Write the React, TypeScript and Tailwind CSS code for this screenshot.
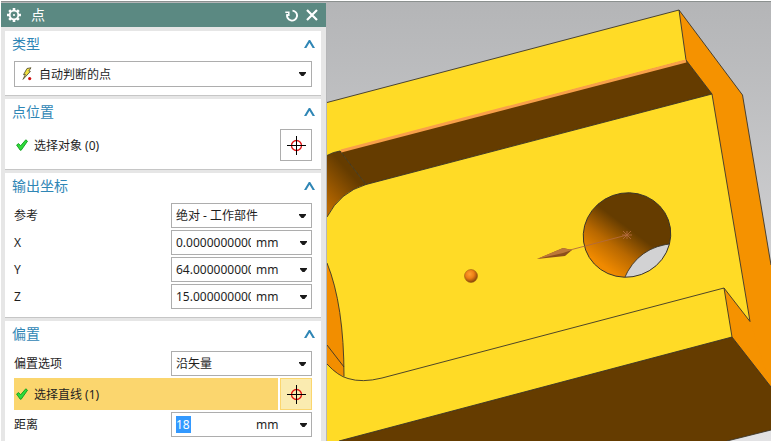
import React, { useState } from 'react';

interface SectionProps {
  title: string;
  children: React.ReactNode;
}

interface OptionSelectProps {
  id: string;
  label: string;
  value: string;
}

const COORDS = [
  { axis: 'X', value: '0.000000000000' },
  { axis: 'Y', value: '64.00000000000' },
  { axis: 'Z', value: '15.00000000000' },
];

const Caret = () => (
  <svg width="7" height="4" viewBox="0 0 7 4" className="pointer-events-none shrink-0" aria-hidden="true">
    <path d="M0 0h7v1L4.5 4h-2L0 1z" fill="#1a1a1a" />
  </svg>
);

const GearIcon = () => (
  <svg width="14" height="14" viewBox="0 0 14 14" aria-hidden="true">
    <g stroke="#fff" strokeWidth="2.6">
      <path d="M7 0v14M0 7h14M2.2 2.2l9.6 9.6M11.8 2.2l-9.6 9.6" />
    </g>
    <circle cx="7" cy="7" r="5.2" fill="#fff" />
    <circle cx="7" cy="7" r="3.4" fill="#5b8982" />
    <circle cx="7" cy="7" r="1.1" fill="#fff" />
  </svg>
);

const ResetIcon = () => (
  <svg width="13" height="14" viewBox="0 0 13 14" fill="none" stroke="#fff" aria-hidden="true">
    <path d="M7.5 2.6A5 5 0 1 1 2.3 6" strokeWidth="1.9" />
    <path d="M.3 4.2h3.5V8" strokeWidth="1.5" />
  </svg>
);

const CloseIcon = () => (
  <svg width="12" height="12" viewBox="0 0 12 12" aria-hidden="true">
    <path d="M1 1l10 10M11 1L1 11" stroke="#fff" strokeWidth="2.2" />
  </svg>
);

const CheckIcon = () => (
  <svg width="12" height="12" viewBox="0 0 12 12" className="shrink-0" aria-hidden="true">
    <path d="M.6 6l2-1.4 2 2.2L9.8.8l1.7 1.4-6.3 9h-1z" fill="#2fdc3c" stroke="#119c1c" strokeWidth=".9" />
  </svg>
);

const TargetIcon = () => (
  <svg width="19" height="19" viewBox="0 0 19 19" fill="none" aria-hidden="true">
    <circle cx="9.5" cy="9.5" r="5" stroke="#e01010" strokeWidth="1.3" />
    <path d="M9.5 0v19M0 9.5h19" stroke="#000" />
  </svg>
);

const InferIcon = () => (
  <svg width="10" height="14" viewBox="0 0 10 14" aria-hidden="true">
    <path d="M5 1.5L9 .8 6.8 4l1.6.4L1 12.4l2.4-5-1.9.3z" fill="#f0e040" stroke="#5a5538" strokeWidth=".9" />
    <circle cx="7.7" cy="11.6" r="1.6" fill="#d01010" />
  </svg>
);

const Section: React.FC<SectionProps> = ({ title, children }) => {
  const [open, setOpen] = useState(true);

  return (
    <section className="border-b border-[#c6c6c6] bg-white pb-2">
      <h2>
        <button
          type="button"
          aria-expanded={open}
          onClick={() => setOpen(!open)}
          className="flex h-[26px] w-full items-center justify-between pr-[6px] pl-[7px] text-sm text-[#2f86b5]"
        >
          {title}
          <svg
            width="11"
            height="8"
            viewBox="0 0 11 8"
            className={open ? '' : 'rotate-180'}
            aria-hidden="true"
          >
            <path d="M0 8L4.8 0h1.4L11 8H8.6L5.5 2.8 2.4 8z" fill="#2f86b5" />
          </svg>
        </button>
      </h2>
      {open && <div className="flex flex-col gap-[2px] px-[9px] pt-1">{children}</div>}
    </section>
  );
};

const OptionSelect: React.FC<OptionSelectProps> = ({ id, label, value }) => (
  <div className="flex items-center">
    <label htmlFor={id} className="flex-1">{label}</label>
    <div className="relative w-[141px]">
      <select
        id={id}
        className="h-[25px] w-full appearance-none border border-[#adadad] bg-white pr-4 pl-1 outline-none"
      >
        <option>{value}</option>
      </select>
      <span className="pointer-events-none absolute inset-y-0 right-[6px] flex items-center"><Caret /></span>
    </div>
  </div>
);

const ValueField: React.FC<OptionSelectProps & { selected?: boolean }> = ({ id, label, value, selected }) => (
  <div className="flex items-center">
    <label htmlFor={id} className="flex-1">{label}</label>
    <div className="flex h-[25px] w-[141px] items-center border border-[#adadad] bg-white pr-1 pl-1">
      <div className="flex w-[75px]">
        <input
          id={id}
          defaultValue={value}
          className={`h-[17px] min-w-0 outline-none ${selected ? 'w-[15px] bg-[#3399ff] text-white' : 'w-full'}`}
        />
      </div>
      <span className="ml-[5px] flex-1">mm</span>
      <button type="button" aria-label={`${label} mm`}><Caret /></button>
    </div>
  </div>
);

const PickRow = ({ label, active = false }: { label: string; active?: boolean }) => (
  <div className="flex gap-[2px]">
    <div className={`flex h-8 flex-1 items-center gap-[6px] pl-[2px] ${active ? 'bg-[#fbd66e]' : ''}`}>
      <CheckIcon />
      <span>{label}</span>
    </div>
    <button
      type="button"
      aria-label={label}
      className={`flex size-8 items-center justify-center border ${
        active ? 'border-[#fbd66e] bg-[#faebb0]' : 'border-[#adadad] bg-white'
      }`}
    >
      <TargetIcon />
    </button>
  </div>
);

const ModelView = () => (
  <svg
    viewBox="327 2 444 439"
    preserveAspectRatio="xMinYMin slice"
    className="h-full w-full"
    role="img"
  >
    <defs>
      <linearGradient id="sky" x1="0" y1="0" x2="0" y2="1">
        <stop offset="0" stopColor="#b4b5b7" />
        <stop offset="1" stopColor="#e2e2e4" />
      </linearGradient>
      <linearGradient id="bore" gradientUnits="userSpaceOnUse" x1="594" y1="256" x2="632" y2="231">
        <stop offset="0" stopColor="#f08a00" />
        <stop offset="0.5" stopColor="#b86800" />
        <stop offset="1" stopColor="#653c00" />
      </linearGradient>
      <linearGradient id="fillet" gradientUnits="userSpaceOnUse" x1="322" y1="200" x2="351" y2="174">
        <stop offset="0" stopColor="#b86800" />
        <stop offset="1" stopColor="#653c00" />
      </linearGradient>
      <radialGradient id="ball" cx="0.4" cy="0.35" r="0.65">
        <stop offset="0" stopColor="#ffa030" />
        <stop offset="0.5" stopColor="#ee7f16" />
        <stop offset="1" stopColor="#8a4708" />
      </radialGradient>
      <clipPath id="bore-rim">
        <ellipse cx="627" cy="235" rx="44" ry="42" transform="rotate(-20 627 235)" />
      </clipPath>
    </defs>
    <rect x="327" y="2" width="444" height="439" fill="url(#sky)" />

    {/* block faces */}
    <path d="M327 102.5L679 10l7 50 26 34 38 227-50 120H327z" fill="#ffdb26" />
    <path d="M679 10l63.5 85L771 265v122L732 337l-8-49 26 33.5L712 94l-26-34z" fill="#f59200" />
    <path d="M732 337l18-16 21 66v4z" fill="#f59200" />
    <path d="M339 441L732 337l39 50v43l-44 11z" fill="#653c00" />

    {/* slot wall and fillet */}
    <path d="M340 151L686 60l26 34L366 184.5z" fill="#653c00" />
    <path d="M327 155.5Q333 152 340 151l26 33.5Q340 192 327 217z" fill="url(#fillet)" />
    <path d="M327 263Q344 305 344 376.5 334 373 327 364z" fill="#f28e00" />

    <g fill="none" stroke="#3a3428" strokeWidth="0.9">
      <path d="M327 102.5L679 10l63.5 85L771 265" />
      <path d="M679 10l7 50 26 34 38 227.5L724 288l8 49 39 50" />
      <path d="M327 155.5Q333 152 340 151l26 33.5L712 94M366 184.5Q340 192 327 217" />
      <path d="M327 263Q344 305 344 376.5M327 345l17 22" />
      <path d="M327 364Q338 376 348 378.5 362 383 382 378L724 288" />
      <path d="M339 441L732 337M727 441l44-11" />
    </g>
    <path d="M341 151L686 61" stroke="#f9a04a" strokeWidth="3" />

    {/* bore */}
    <ellipse cx="627" cy="235" rx="44" ry="42" transform="rotate(-20 627 235)" fill="url(#bore)" />
    <path
      d="M674 243.5Q638 246 624 279h50z"
      clipPath="url(#bore-rim)"
      fill="#d2d2d3"
      stroke="#3a3428"
      strokeWidth="0.9"
    />
    <ellipse cx="627" cy="235" rx="44" ry="42" transform="rotate(-20 627 235)" fill="none" stroke="#3a3428" strokeWidth="0.9" />

    {/* offset vector */}
    <path d="M570 250L627 235M622 235h10M627 231v8M623 231l8 8M631 231l-8 8" stroke="#b26a3c" strokeWidth="0.9" />
    <path d="M537 259l26-11 9 2-7 6z" fill="#8c4f1b" />
    <path d="M537 259l26-11 9 2-9 3z" fill="#bd7838" />
    <circle cx="471" cy="276" r="6.5" fill="url(#ball)" stroke="#925111" strokeWidth="0.5" />
  </svg>
);

export default function App() {
  return (
    <div className="flex h-screen flex-col overflow-hidden bg-white pt-px pl-px font-['Noto_Sans','Noto_Sans_CJK_SC',sans-serif] text-xs leading-[17px] text-[#1e1e1e]">
      <div className="flex min-h-0 flex-1 border-t border-[#8b908f]">
        <aside className="w-[326px] shrink-0 overflow-hidden border-t border-r border-[#b5b6b8] bg-[#e6e6e6]">
          <header className="flex h-6 items-center bg-[#5b8982] pr-2 pl-[6px] text-white">
            <GearIcon />
            <h1 className="ml-[10px] flex-1 text-sm">点</h1>
            <button type="button" aria-label="重置" className="mr-2"><ResetIcon /></button>
            <button type="button" aria-label="关闭"><CloseIcon /></button>
          </header>

          <div className="flex flex-col gap-[3px] pt-1 pr-[5px] pl-1">
            <Section title="类型">
              <div className="relative">
                <span className="pointer-events-none absolute inset-y-0 left-[8px] flex items-center"><InferIcon /></span>
                <select
                  aria-label="类型"
                  className="h-[26px] w-full appearance-none border border-[#adadad] pr-4 pl-6 outline-none"
                >
                  <option>自动判断的点</option>
                </select>
                <span className="pointer-events-none absolute inset-y-0 right-[6px] flex items-center"><Caret /></span>
              </div>
            </Section>

            <Section title="点位置">
              <PickRow label="选择对象 (0)" />
            </Section>

            <Section title="输出坐标">
              <OptionSelect id="reference" label="参考" value="绝对 - 工作部件" />
              {COORDS.map(c => (
                <ValueField key={c.axis} id={`coord-${c.axis}`} label={c.axis} value={c.value} />
              ))}
            </Section>

            <Section title="偏置">
              <OptionSelect id="offset-option" label="偏置选项" value="沿矢量" />
              <PickRow label="选择直线 (1)" active />
              <ValueField id="distance" label="距离" value="18" selected />
            </Section>
          </div>
        </aside>

        <main className="min-w-0 flex-1 overflow-hidden">
          <ModelView />
        </main>
      </div>
    </div>
  );
}
